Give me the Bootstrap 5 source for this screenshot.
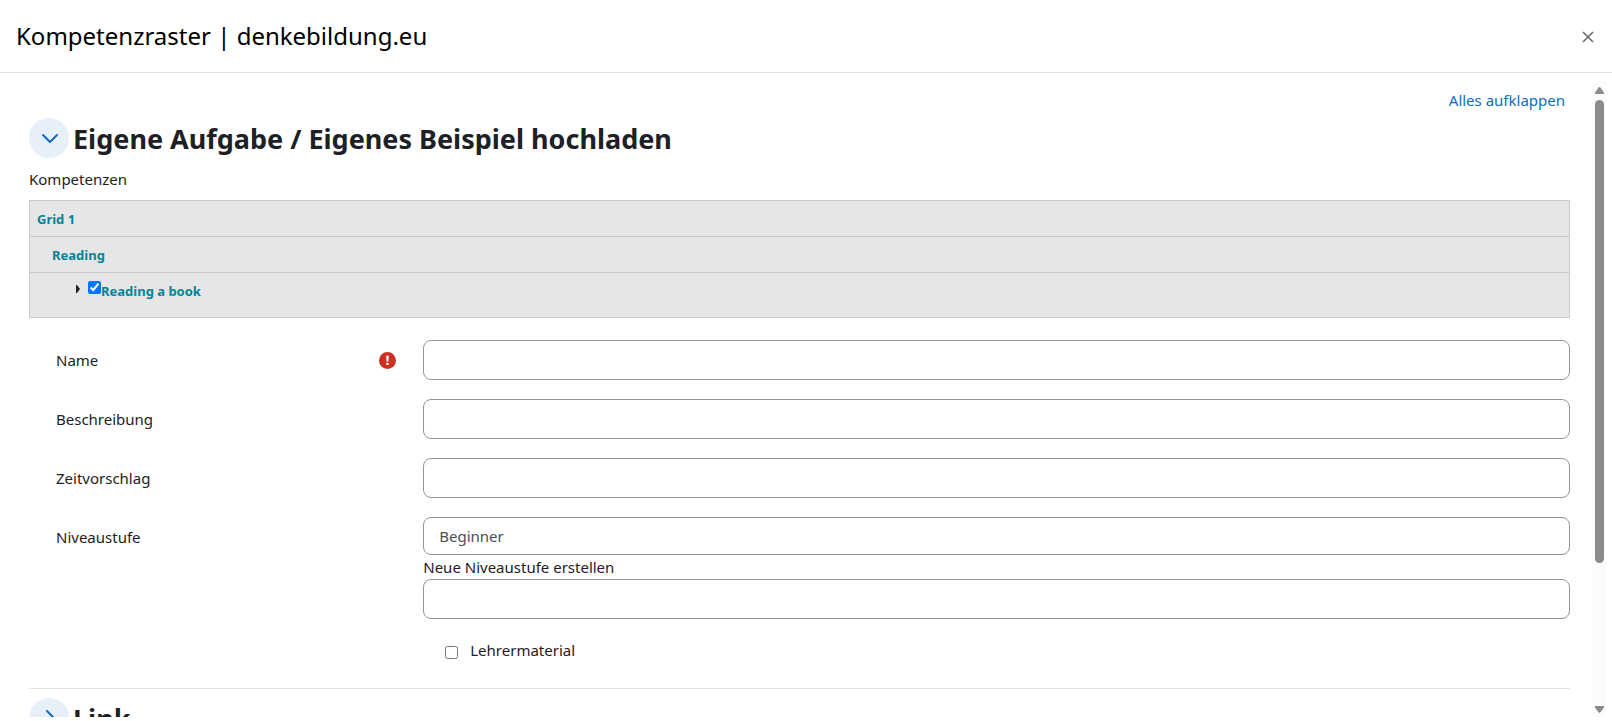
<!DOCTYPE html>
<html lang="de">
<head>
<meta charset="utf-8">
<meta name="viewport" content="width=device-width, initial-scale=1">
<title>Kompetenzraster | denkebildung.eu</title>
<link href="https://cdn.jsdelivr.net/npm/bootstrap@5.3.0/dist/css/bootstrap.min.css" rel="stylesheet">
<style>
  body { font-family: "Noto Sans", "Open Sans", sans-serif; font-size: 15px; line-height: 24px; color: #1d2125; background: #fff; }
  .dialog-title { font-size: 24px; line-height: 40px; color: #000; }
  .dialog-head { padding: 16px; border-color: #dee2e6; }
  .close-btn { width: 16px; height: 16px; line-height: 0; }
  .dialog-body { padding: 9px 6px 4px 29px; }
  .form-pane { padding: 6px 22px 0 0; }
  a { color: #0f6cbf; text-decoration: none; }
  .expand-all { padding-right: 5px; }
  .section-head { gap: 4px; margin-top: 6px; margin-bottom: 9px; }
  .section-title { font-size: 27px; line-height: 36px; padding-top: 2px; font-weight: 700; }
  .toggle-btn { width: 40px; height: 40px; background: #e7f0f9; color: #0f6cbf; }
  .comp-table { font-size: 13px; line-height: 20px; margin: 9px 0 22px; border: 1px solid #c8c9ca; background: #e6e6e6; }
  .comp-table td { border: 1px solid #c8c9ca; padding: 8px 7px 7px; height: 36px; font-weight: 700; color: #00859b; }
  .comp-table .topic { padding-left: 22px; }
  .comp-table .descriptor { padding-left: 46px; padding-bottom: 16px; }
  .tick { width: 13px; height: 13px; margin: 0; flex: none; }
  .field-row { margin-bottom: 19px; }
  .field-label { padding: 8px 18px 8px 27px; }
  .field-cell { padding-left: 9px; }
  .form-control, .form-select { height: 40px; font-size: 15px; line-height: 24px; padding: 6px 15px; border-color: #8f959e; border-radius: 8px; color: #495057; }
  .form-select { height: 38px; background-image: none; }
  .check-row { padding-left: 22px; gap: 12px; margin-bottom: 26px; }
  .check-row .tick { margin-top: 8px; }
  .section-rule { height: 1px; margin-bottom: 9px; background: #dee2e6; }
  .scroll-track { width: 14px; background: #fcfcfc; color: #8b8b8b; padding: 5px 0 4px; gap: 6px; }
  .scroll-thumb { width: 9px; height: 74%; border-radius: 5px; background: #8b8b8b; }
</style>
</head>
<body class="vh-100 d-flex flex-column overflow-hidden">
<header class="dialog-head border-bottom d-flex align-items-center justify-content-between">
  <h1 class="dialog-title fw-normal m-0">Kompetenzraster | denkebildung.eu</h1>
  <button type="button" class="close-btn btn p-0 border-0" aria-label="Schließen">
    <svg width="16" height="16" viewBox="0 0 16 16" fill="none" stroke="#6a6a6a" stroke-width="1.6"><path d="M3 4l10 10M13 4L3 14"/></svg>
  </button>
</header>
<div class="dialog-body flex-grow-1 d-flex overflow-hidden">
  <main class="form-pane flex-grow-1 overflow-hidden">
    <form>
      <div class="expand-all text-end"><a href="#">Alles aufklappen</a></div>
      <div class="section-head d-flex align-items-center">
        <button type="button" class="toggle-btn btn rounded-circle p-0 border-0 d-flex align-items-center justify-content-center" aria-label="Einklappen" aria-expanded="true">
          <svg width="20" height="20" viewBox="0 0 20 20" fill="none" stroke="currentColor" stroke-width="2" stroke-linecap="round" stroke-linejoin="round"><path d="M4 7l7 7 7-7"/></svg>
        </button>
        <h2 class="section-title m-0">Eigene Aufgabe / Eigenes Beispiel hochladen</h2>
      </div>
      <div>Kompetenzen</div>
      <table class="comp-table w-100">
        <tbody>
          <tr><td>Grid 1</td></tr>
          <tr><td class="topic">Reading</td></tr>
          <tr><td class="descriptor">
            <div class="d-flex">
              <svg class="flex-shrink-0 me-2" width="4" height="16" viewBox="0 0 4 16" fill="#222"><path d="M0 4h1l3 4-3 4H0z"/></svg>
              <input class="tick" type="checkbox" id="book" checked>
              <label for="book">Reading a book</label>
            </div>
          </td></tr>
        </tbody>
      </table>
      <div class="field-row row g-0">
        <div class="field-label col-3 d-flex align-items-center justify-content-between">
          <label for="name">Name</label>
          <svg width="17" height="17" viewBox="0 0 17 17" role="img" aria-label="Erforderlich"><circle cx="8.5" cy="8.5" r="8.5" fill="#ca3120"/><path d="M7.2 3.8h2.6l-.4 5.6H7.600zM7.400 10.700h2.200v2.200H7.400z" fill="#fff"/></svg>
        </div>
        <div class="field-cell col-9"><input type="text" class="form-control" id="name" required></div>
      </div>
      <div class="field-row row g-0">
        <div class="field-label col-3"><label for="desc">Beschreibung</label></div>
        <div class="field-cell col-9"><input type="text" class="form-control" id="desc"></div>
      </div>
      <div class="field-row row g-0">
        <div class="field-label col-3"><label for="time">Zeitvorschlag</label></div>
        <div class="field-cell col-9"><input type="text" class="form-control" id="time"></div>
      </div>
      <div class="field-row row g-0">
        <div class="field-label col-3"><label for="level">Niveaustufe</label></div>
        <div class="field-cell col-9">
          <select class="form-select" id="level"><option>Beginner</option></select>
          <label class="d-block" for="newlevel">Neue Niveaustufe erstellen</label>
          <input type="text" class="form-control" id="newlevel">
        </div>
      </div>
      <div class="row g-0">
        <div class="field-cell col-9 offset-3">
          <div class="check-row d-flex">
            <input class="tick" type="checkbox" id="teacher">
            <label for="teacher">Lehrermaterial</label>
          </div>
        </div>
      </div>
      <div class="section-rule"></div>
      <div class="section-head d-flex align-items-center mt-0">
        <button type="button" class="toggle-btn btn rounded-circle p-0 border-0 d-flex align-items-center justify-content-center" aria-label="Ausklappen" aria-expanded="false">
          <svg width="20" height="20" viewBox="0 0 20 20" fill="none" stroke="currentColor" stroke-width="2" stroke-linecap="round" stroke-linejoin="round"><path d="M8 3l7 7-7 7"/></svg>
        </button>
        <h2 class="section-title m-0">Link</h2>
      </div>
    </form>
  </main>
  <div class="scroll-track flex-shrink-0 d-flex flex-column align-items-center" aria-hidden="true">
    <svg class="flex-shrink-0" width="9" height="7" viewBox="0 0 9 7" fill="currentColor"><path d="M3.700.5q.8-.8 1.600 0L9 5.500V7H0V5.500z"/></svg>
    <div class="scroll-thumb"></div>
    <svg class="flex-shrink-0 mt-auto" width="9" height="7" viewBox="0 0 9 7" fill="currentColor"><path d="M3.700 6.500q.8.800 1.600 0L9 1.500V0H0v1.500z"/></svg>
  </div>
</div>
<script src="https://cdn.jsdelivr.net/npm/bootstrap@5.3.0/dist/js/bootstrap.bundle.min.js"></script>
</body>
</html>
